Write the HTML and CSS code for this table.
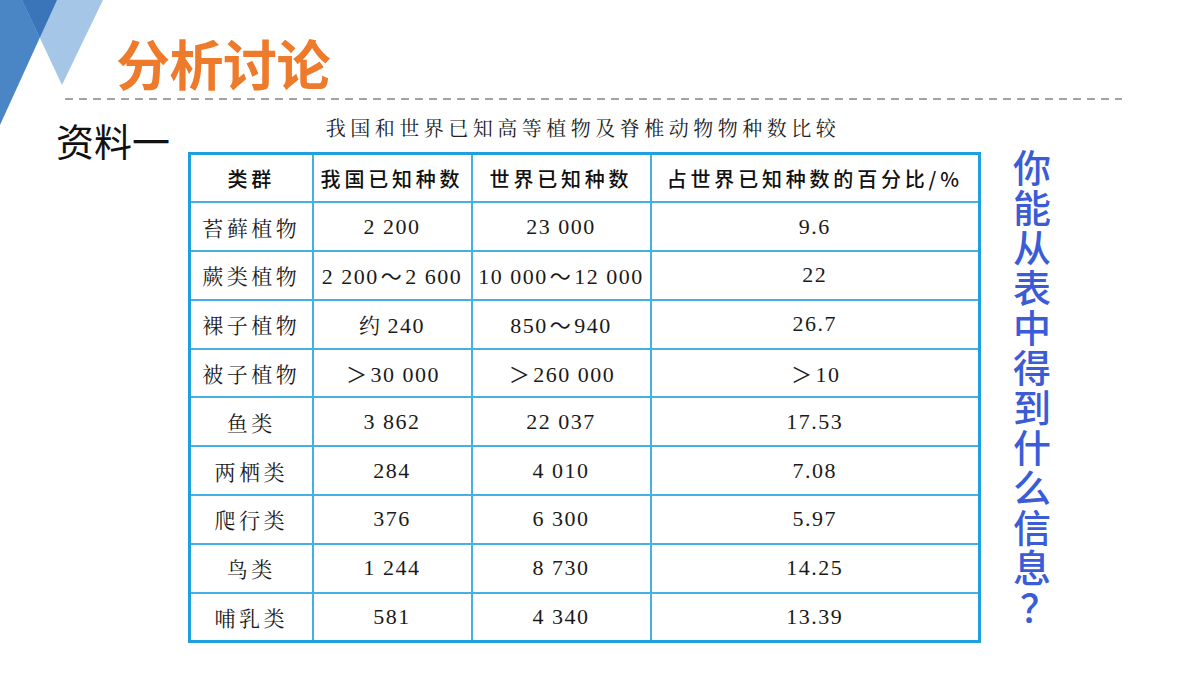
FILE: index.html
```html
<!DOCTYPE html>
<html lang="zh-CN">
<head>
<meta charset="utf-8">
<title>分析讨论</title>
<link rel="stylesheet" href="styles.css">
</head>
<body>
<div class="slide">
  <svg class="deco" width="110" height="130" viewBox="0 0 110 130">
    <polygon points="0,0 57,0 0,125" fill="#4a86c5"/>
    <polygon points="22,0 103,0 62,85" fill="#a6c6e8"/>
    <polygon points="22,0 57,0 39.8,37.8" fill="#3a74b9"/>
  </svg>
  <h1 class="title">分析讨论</h1>
  <div class="rule"></div>
  <div class="content">
    <div class="label">资料一</div>
    <div class="tablebox">
      <div class="caption">我国和世界已知高等植物及脊椎动物物种数比较</div>
      <table class="data">
        <colgroup>
          <col class="c1"><col class="c2"><col class="c3"><col class="c4">
        </colgroup>
        <thead>
          <tr><th>类群</th><th>我国已知种数</th><th>世界已知种数</th><th>占世界已知种数的百分比/%</th></tr>
        </thead>
        <tbody>
          <tr><td>苔藓植物</td><td class="num">2 200</td><td class="num">23 000</td><td class="num">9.6</td></tr>
          <tr><td>蕨类植物</td><td class="num">2 200<span class="t">～</span>2 600</td><td class="num">10 000<span class="t">～</span>12 000</td><td class="num">22</td></tr>
          <tr><td>裸子植物</td><td class="num"><span class="cj">约</span>240</td><td class="num">850<span class="t">～</span>940</td><td class="num">26.7</td></tr>
          <tr><td>被子植物</td><td class="num"><span class="t">＞</span>30 000</td><td class="num"><span class="t">＞</span>260 000</td><td class="num"><span class="t">＞</span>10</td></tr>
          <tr><td>鱼类</td><td class="num">3 862</td><td class="num">22 037</td><td class="num">17.53</td></tr>
          <tr><td>两栖类</td><td class="num">284</td><td class="num">4 010</td><td class="num">7.08</td></tr>
          <tr><td>爬行类</td><td class="num">376</td><td class="num">6 300</td><td class="num">5.97</td></tr>
          <tr><td>鸟类</td><td class="num">1 244</td><td class="num">8 730</td><td class="num">14.25</td></tr>
          <tr><td>哺乳类</td><td class="num">581</td><td class="num">4 340</td><td class="num">13.39</td></tr>
        </tbody>
      </table>
    </div>
    <div class="question">
      <span>你</span><span>能</span><span>从</span><span>表</span><span>中</span><span>得</span><span>到</span><span>什</span><span>么</span><span>信</span><span>息</span><span class="qm">？</span>
    </div>
  </div>
</div>
</body>
</html>
```

FILE: styles.css
```css
html, body {
  margin: 0;
  padding: 0;
  background: #ffffff;
}
.slide {
  position: relative;
  width: 1200px;
  height: 675px;
  overflow: hidden;
  background: #ffffff;
  font-family: "Noto Sans CJK SC", "Noto Sans", sans-serif;
}
.deco {
  position: absolute;
  left: 0;
  top: 0;
}
.title {
  margin: 0;
  padding: 33px 0 0 116px;
  font-size: 54px;
  line-height: 60px;
  font-weight: 700;
  color: #ee7b2c;
  letter-spacing: -0.5px;
}
.rule {
  margin: 5px 0 0 65px;
  width: 1057px;
  height: 2px;
  background: repeating-linear-gradient(to right, #a3a3a3 0 8px, transparent 8px 14px);
}
.content {
  display: flex;
  align-items: flex-start;
  padding: 14px 0 0 56px;
}
.label {
  width: 132px;
  margin-top: 4px;
  font-size: 38px;
  line-height: 44px;
  color: #111111;
  font-weight: 400;
}
.tablebox {
  width: 790px;
}
.caption {
  height: 28px;
  line-height: 28px;
  margin-bottom: 10px;
  text-align: center;
  font-family: "Noto Serif CJK SC", "Noto Sans CJK SC", serif;
  font-size: 20px;
  letter-spacing: 4.5px;
  color: #222222;
}
.data {
  width: 790px;
  table-layout: fixed;
  border-collapse: collapse;
  border: 3px solid #1ea0de;
  color: #1a1a1a;
}
.c1 { width: 123px; }
.c2 { width: 159px; }
.c3 { width: 179px; }
.c4 { width: 329px; }
.data tr {
  height: 48.8px;
}
.data th, .data td {
  border: 2px solid #44b1e4;
  padding: 0;
  text-align: center;
  vertical-align: middle;
  white-space: nowrap;
}
.data th {
  font-family: "Noto Sans CJK SC", sans-serif;
  font-size: 20px;
  font-weight: 500;
  letter-spacing: 3.8px;
  color: #111111;
}
.data td {
  font-family: "Noto Serif CJK SC", "Noto Sans CJK SC", serif;
  font-size: 21px;
  letter-spacing: 3.5px;
  font-weight: 400;
}
.data td.num {
  font-family: "Liberation Serif", serif;
  font-size: 22px;
  letter-spacing: 1.5px;
}
.t {
  font-family: "Noto Sans CJK SC", sans-serif;
  font-size: 21px;
  margin: 0 2px;
}
.cj {
  font-family: "Noto Serif CJK SC", "Noto Sans CJK SC", serif;
  font-size: 21px;
  margin-right: 6px;
}
.question {
  display: flex;
  flex-direction: column;
  align-items: center;
  width: 40px;
  margin: 32px 0 0 34px;
  font-size: 38px;
  line-height: 40px;
  font-weight: 500;
  color: #3b5cd6;
}
.question span {
  display: block;
}
.question .qm {
  margin-left: 14px;
}
```
